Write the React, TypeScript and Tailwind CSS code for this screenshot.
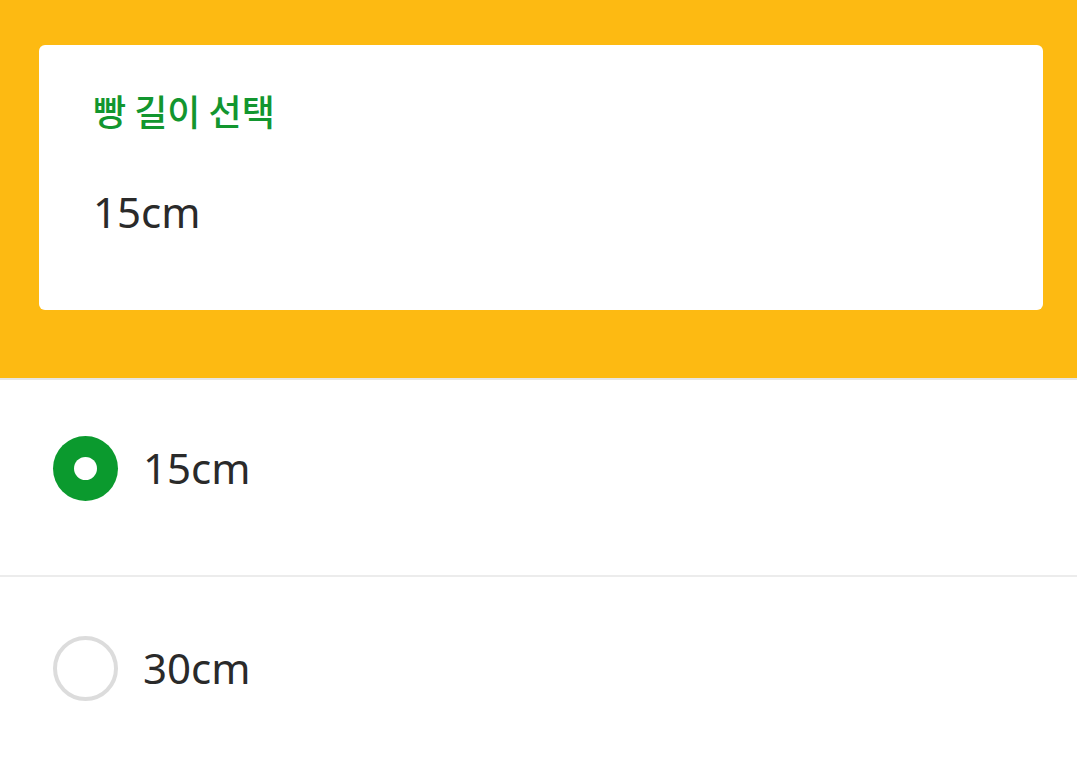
export default function App() {
  const font = { fontFamily: '"Noto Sans", "Noto Sans CJK KR", sans-serif' };
  return (
    <div className="w-[1077px] h-[772px] bg-white overflow-hidden" style={font}>
      <div className="bg-[#fdba12] h-[378px] pt-[45px] pl-[39px] pr-[34px]">
        <div className="bg-white rounded-[6px] h-[265px] pl-[54px] pt-[45px]">
          <div className="text-[#12962f] text-[36px] font-medium leading-[40px]" style={{ fontFamily: '"Noto Sans CJK KR", sans-serif' }}>
            빵 길이 선택
          </div>
          <div className="mt-[54px] text-[#2a2a2a] text-[42px] leading-[56px]">15cm</div>
        </div>
      </div>
      <div className="border-t-2 border-[#e6e6e6]">
        <div className="h-[197px] flex items-center pl-[53px] pb-[18px] gap-[25px] border-b-2 border-[#ececec]">
          <div className="w-[65px] h-[65px] rounded-full bg-[#0b9a2e] flex items-center justify-center">
            <div className="w-[23px] h-[23px] rounded-full bg-white" />
          </div>
          <div className="text-[#2a2a2a] text-[42px] -mt-[2px]">15cm</div>
        </div>
        <div className="h-[190px] flex items-center pl-[53px] pb-[8px] gap-[25px]">
          <div className="w-[65px] h-[65px] rounded-full border-[4px] border-[#dcdcdc]" />
          <div className="text-[#2a2a2a] text-[42px] -mt-[2px]">30cm</div>
        </div>
      </div>
    </div>
  );
}
